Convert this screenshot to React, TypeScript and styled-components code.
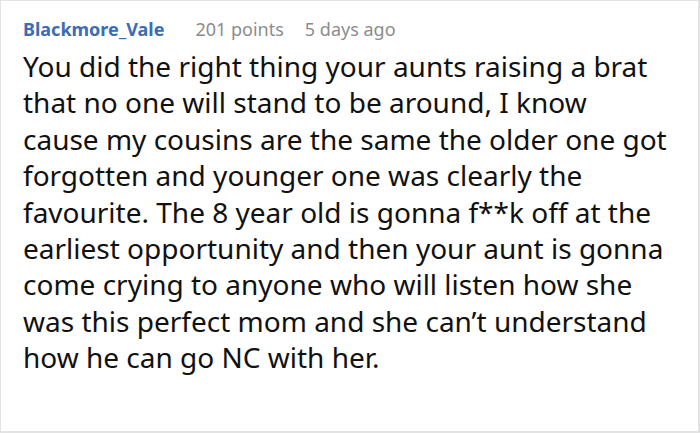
import React from "react";
import styled, { createGlobalStyle } from "styled-components";

const GlobalStyle = createGlobalStyle`
  html, body {
    margin: 0;
    padding: 0;
    background: #ffffff;
  }
  body {
    font-family: "Noto Sans", "Open Sans", sans-serif;
  }
`;

const Card = styled.div`
  box-sizing: border-box;
  width: 700px;
  height: 433px;
  border-style: solid;
  border-color: #e3e3e3;
  border-width: 1px 2px 2px 1px;
  padding: 16px 10px 0 22px;
  background: #ffffff;
  overflow: hidden;
`;

const Header = styled.div`
  display: flex;
  align-items: baseline;
  gap: 21px;
  height: 31px;
`;

const Author = styled.span`
  font-size: 18px;
  font-weight: 700;
  color: #3b6cb6;
  margin-right: 10px;
`;

const Meta = styled.span`
  font-size: 18px;
  color: #8c8c8c;
`;

const Body = styled.div`
  font-size: 28px;
  line-height: 36.4px;
  color: #111111;
`;

const Line = styled.div`
  white-space: nowrap;
`;

const lines = [
  "You did the right thing your aunts raising a brat",
  "that no one will stand to be around, I know",
  "cause my cousins are the same the older one got",
  "forgotten and younger one was clearly the",
  "favourite. The 8 year old is gonna f**k off at the",
  "earliest opportunity and then your aunt is gonna",
  "come crying to anyone who will listen how she",
  "was this perfect mom and she can’t understand",
  "how he can go NC with her.",
];

const App = () => (
  <>
    <GlobalStyle />
    <Card>
      <Header>
        <Author>Blackmore_Vale</Author>
        <Meta>201 points</Meta>
        <Meta>5 days ago</Meta>
      </Header>
      <Body>
        {lines.map((text) => (
          <Line key={text}>{text}</Line>
        ))}
      </Body>
    </Card>
  </>
);

export default App;
